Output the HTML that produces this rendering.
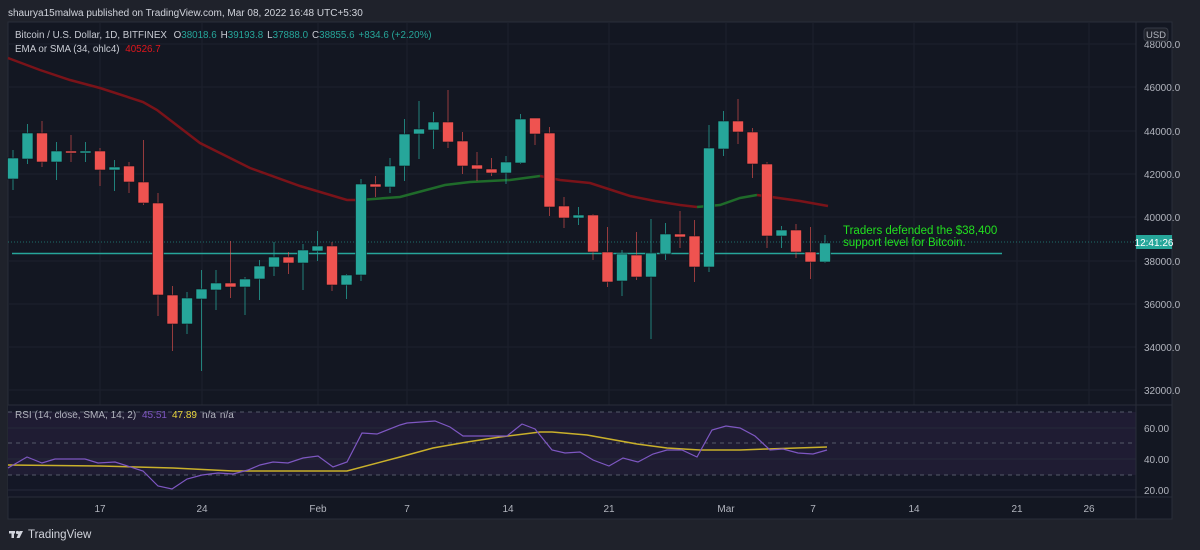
<!DOCTYPE html>
<html><head><meta charset="utf-8"><style>
html,body{margin:0;padding:0;background:#1f222b;width:1200px;height:550px;overflow:hidden;font-family:"Liberation Sans",sans-serif}
svg{position:absolute;left:0;top:0}
</style></head><body>
<svg id="s" width="1200" height="550" xmlns="http://www.w3.org/2000/svg" font-family="Liberation Sans, sans-serif">
<rect x="0" y="0" width="1200" height="550" fill="#1f222b"/>
<rect x="8" y="22" width="1164" height="497" fill="#131722" stroke="#2a2e39"/>
<g id="grid" stroke="#1d212d" stroke-width="1"></g>
<rect x="8" y="405" width="1128" height="92" fill="#141726"/>
<rect x="8" y="412" width="1128" height="63" fill="#1f1c33"/>
<g id="rsigrid"></g>
<line x1="8" y1="405" x2="1172" y2="405" stroke="#2a2e39"/>
<line x1="8" y1="497" x2="1172" y2="497" stroke="#2a2e39"/>
<line x1="1136" y1="22" x2="1136" y2="519" stroke="#2a2e39"/>
<g id="ema" fill="none" stroke-width="2.5"></g>
<line x1="8" y1="242" x2="1136" y2="242" stroke="#26a69a" stroke-opacity="0.6" stroke-dasharray="1 2"/>
<line x1="12" y1="253.5" x2="1002" y2="253.5" stroke="#26a69a" stroke-width="1.6"/>
<g id="candles"></g>
<polyline id="rsiy" fill="none" stroke="#c9b02b" stroke-width="1.5"/>
<polyline id="rsip" fill="none" stroke="#7e57c2" stroke-width="1.2"/>
<text x="843" y="234" font-size="11.5" fill="#22e01f">Traders defended the $38,400</text>
<text x="843" y="246" font-size="11.5" fill="#22e01f">support level for Bitcoin.</text>
<g font-size="10" fill="#b2b5be" id="plabels"></g>
<rect x="1144" y="28" width="24" height="13" rx="3" fill="#1f222b" stroke="#363a45"/>
<text x="1156" y="38" font-size="9.5" fill="#b2b5be" text-anchor="middle">USD</text>
<rect x="1136" y="235" width="36" height="14" fill="#26a69a"/>
<text x="1154" y="246" font-size="10" fill="#fff" text-anchor="middle">12:41:26</text>
<g font-size="10" fill="#b2b5be" text-anchor="middle">
<text x="100" y="512">17</text><text x="202" y="512">24</text><text x="318" y="512">Feb</text><text x="407" y="512">7</text><text x="508" y="512">14</text><text x="609" y="512">21</text><text x="726" y="512">Mar</text><text x="813" y="512">7</text><text x="914" y="512">14</text><text x="1017" y="512">21</text><text x="1089" y="512">26</text>
</g>
<text x="8" y="16" font-size="10" fill="#d1d4dc">shaurya15malwa published on TradingView.com, Mar 08, 2022 16:48 UTC+5:30</text>
<text x="15" y="38" font-size="9.8" fill="#c9ccd4">Bitcoin / U.S. Dollar, 1D, BITFINEX <tspan dx="4">O</tspan><tspan fill="#26a69a">38018.6</tspan><tspan dx="4">H</tspan><tspan fill="#26a69a">39193.8</tspan><tspan dx="4">L</tspan><tspan fill="#26a69a">37888.0</tspan><tspan dx="4">C</tspan><tspan fill="#26a69a">38855.6</tspan><tspan dx="4" fill="#26a69a">+834.6 (+2.20%)</tspan></text>
<text x="15" y="52" font-size="9.8" fill="#c9ccd4">EMA or SMA (34, ohlc4) <tspan dx="3" fill="#e0171c">40526.7</tspan></text>
<text x="15" y="418" font-size="10" fill="#b2b5be">RSI (14, close, SMA, 14, 2) <tspan dx="3" fill="#7e57c2">45.51</tspan><tspan dx="5" fill="#e8d53b">47.89</tspan><tspan dx="5">n/a</tspan><tspan dx="4">n/a</tspan></text>
<g fill="#d1d4dc"><rect x="9" y="531" width="6" height="2.5"/><rect x="11.5" y="531" width="2.5" height="7"/><circle cx="17.5" cy="532.5" r="1.6"/><path d="M19.5 531h3.5l-3.5 7h-3z"/></g>
<text x="28" y="538" font-size="11.5" fill="#d1d4dc">TradingView</text>
</svg>
<script>
var NS="http://www.w3.org/2000/svg";
function el(p,t,a){var e=document.createElementNS(NS,t);for(var k in a)e.setAttribute(k,a[k]);document.getElementById(p).appendChild(e);return e;}
[44,87,131,174,217,261,304,347,390].forEach(function(y){el("grid","line",{x1:8,x2:1136,y1:y,y2:y});});
[100,202,318,407,508,609,726,813,914,1017,1089].forEach(function(x){el("grid","line",{x1:x,x2:x,y1:22,y2:497});});
[428,459,490].forEach(function(y){el("rsigrid","line",{x1:8,x2:1136,y1:y,y2:y,stroke:"#262a3a"});});
[412,443,475].forEach(function(y){el("rsigrid","line",{x1:8,x2:1136,y1:y,y2:y,stroke:"#555a6a","stroke-dasharray":"4 4"});});
var pl=[["48000.0",48],["46000.0",91],["44000.0",135],["42000.0",178],["40000.0",221],["38000.0",265],["36000.0",308],["34000.0",351],["32000.0",394],["60.00",432],["40.00",463],["20.00",494]];
pl.forEach(function(p){var t=el("plabels","text",{x:1144,y:p[1]});t.textContent=p[0];});
var C=[[150,158,179,190,1],[124,133,159,164,1],[121,133,162,167,0],[142,151,162,180,1],[135,151,152,162,0],[142,151,152,162,1],[148,151,170,186,0],[160,167,170,191,1],[162,166,182,193,0],[140,182,203,205,0],[193,203,295,316,0],[286,295,324,351,0],[292,298,324,334,1],[270,289,299,371,1],[270,283,290,310,1],[241,283,287,298,0],[277,279,287,315,1],[260,266,279,300,1],[242,257,267,276,1],[252,257,263,274,0],[244,250,263,290,1],[231,246,251,261,1],[242,246,285,291,0],[274,275,285,299,1],[179,184,275,281,1],[176,184,187,197,0],[158,166,187,193,1],[119,134,166,181,1],[101,129,134,159,1],[112,122,130,149,1],[90,122,142,148,0],[132,141,166,174,0],[152,165,169,181,0],[158,169,173,176,0],[156,162,173,184,1],[114,119,163,164,1],[118,118,134,145,0],[127,133,207,216,0],[197,206,218,228,0],[207,215,218,225,1],[214,215,252,260,0],[227,252,282,287,0],[250,254,281,296,1],[232,255,277,280,0],[219,253,277,339,1],[223,234,254,260,1],[211,234,237,248,0],[220,236,267,282,0],[125,148,267,272,1],[111,121,149,156,1],[99,121,132,144,0],[128,132,164,178,0],[162,164,236,248,0],[226,230,236,248,1],[224,230,252,258,0],[227,252,262,279,0],[235,243,262,263,1]];
C.forEach(function(c,i){var x=13+i*14.5;var col=c[4]?"#26a69a":"#ef5350";
el("candles","line",{x1:x,x2:x,y1:c[0],y2:c[3],stroke:col,"stroke-opacity":c[4]?0.75:0.6});
var h=Math.max(c[2]-c[1],2);el("candles","rect",{x:x-5.5,y:c[1],width:11,height:h,fill:col,stroke:"#0f1219","stroke-width":0.6});});
var segs=[["#7a1319","8,58 40,70 70,80 100,88 143,102 157,110 200,143 250,168 300,186 347,200 360,200"],["#1f6b2a","360,200 400,197 445,185 470,182 510,180 540,176"],["#7a1319","540,176 560,180 590,183 630,196 655,201 680,205 697,207"],["#1f6b2a","697,207 720,205 740,198 757,195"],["#7a1319","757,195 800,201 828,206"]];
segs.forEach(function(s){el("ema","polyline",{points:s[1],stroke:s[0]});});
document.getElementById("rsip").setAttribute("points","8,468 27,457 42,463 55,459 85,459 98,463 115,462 143,471 158,486 172,489 187,479 202,475 218,473 233,474 248,470 260,465 273,462 288,463 303,458 318,456 333,467 347,462 362,433 377,434 400,425 407,423 435,421 450,427 463,436 507,436 522,424 535,429 552,450 565,453 580,452 593,460 609,466 623,458 638,462 653,454 667,450 682,450 697,457 712,430 726,426 740,428 755,436 770,450 783,449 798,453 813,454 827,450");
document.getElementById("rsiy").setAttribute("points","8,465 100,466 173,468 233,471 347,471 400,457 433,448 467,442 500,437 540,432 552,432 587,435 637,444 667,448 700,450 740,450 767,449 827,447");
</script>
</body></html>
